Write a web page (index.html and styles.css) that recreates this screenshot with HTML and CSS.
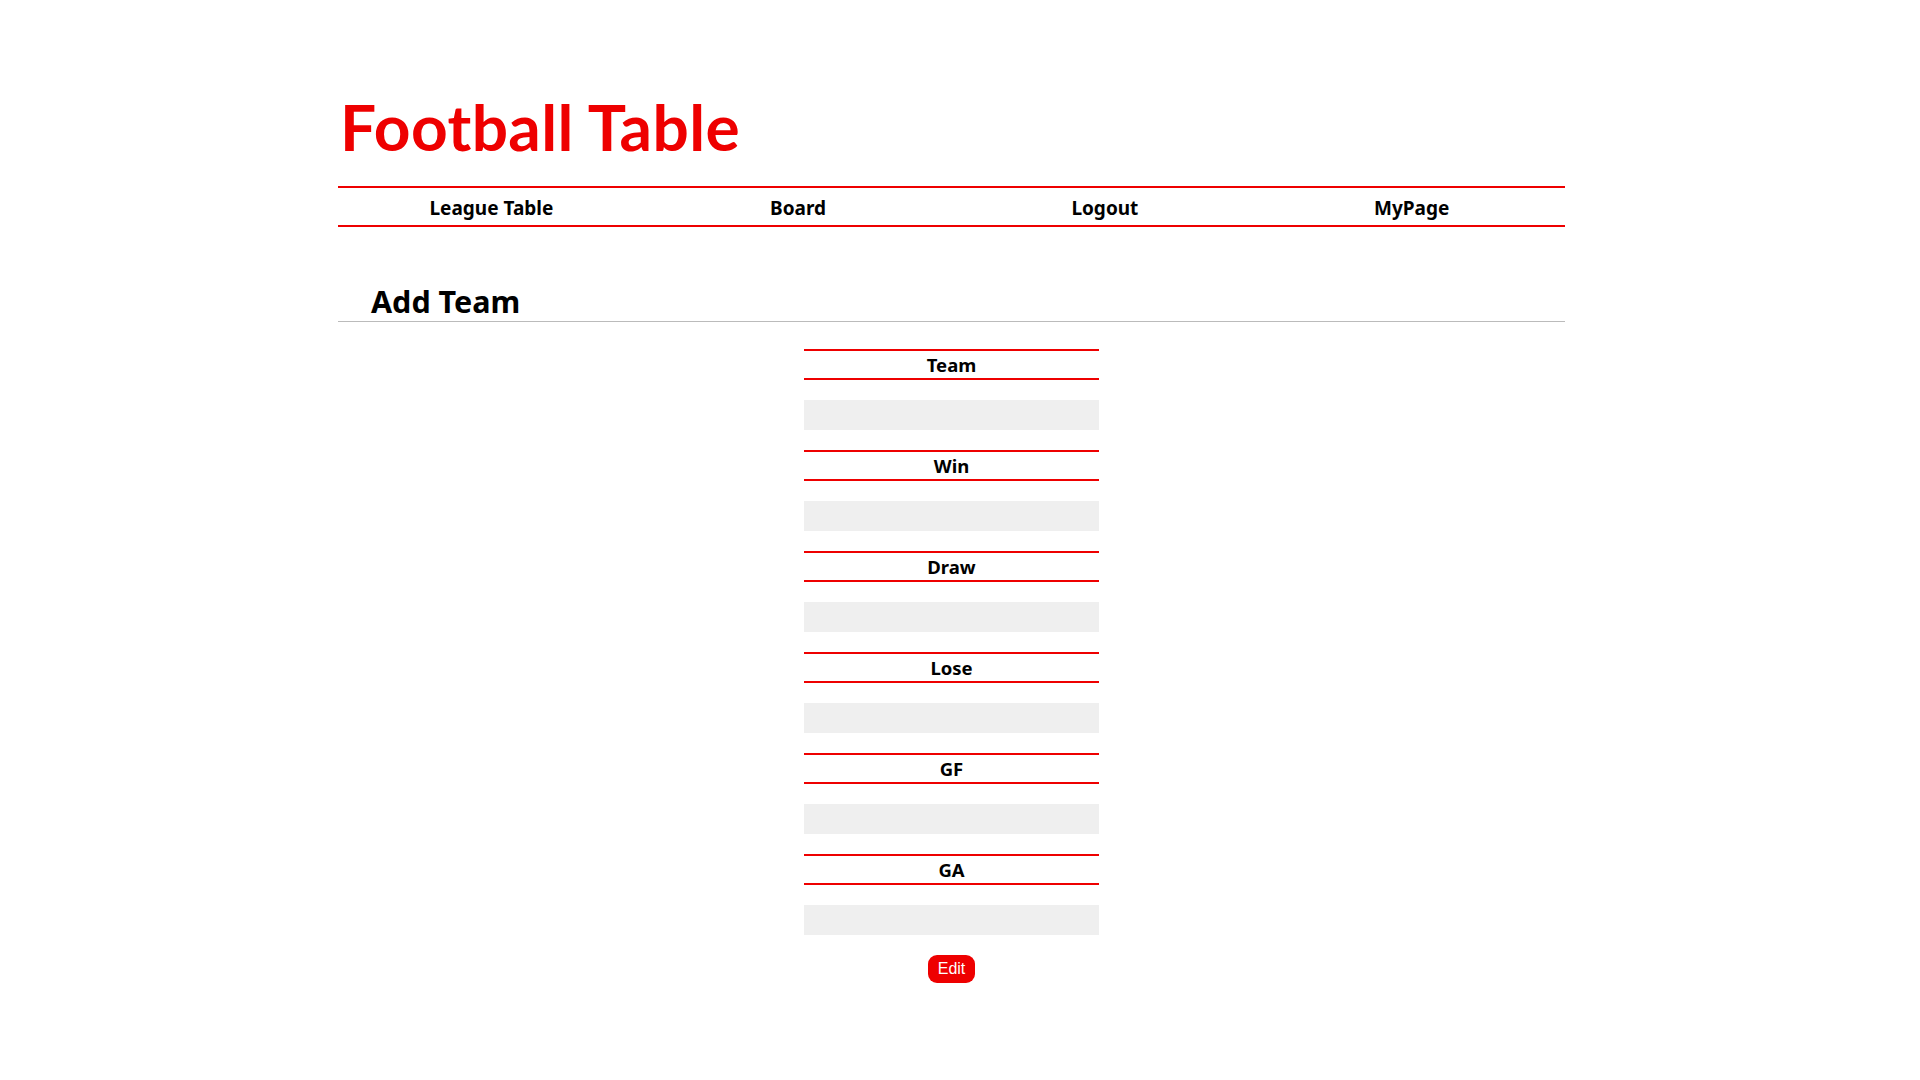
FILE: index.html
```html
<!DOCTYPE html>
<html lang="en">
<head>
<meta charset="utf-8">
<title>Football Table - Add Team</title>
<link rel="stylesheet" href="styles.css">
</head>
<body>
<div class="wrap">
  <header class="header">
    <h1 class="title">Football Table</h1>
    <nav class="nav">
      <a class="nav-item" href="#">League Table</a>
      <a class="nav-item" href="#">Board</a>
      <a class="nav-item" href="#">Logout</a>
      <a class="nav-item" href="#">MyPage</a>
    </nav>
  </header>
  <main class="main">
    <h2 class="section-title">Add Team</h2>
    <form class="form">
      <div class="field"><label class="field-label">Team</label><input class="field-input" type="text"></div>
      <div class="field"><label class="field-label">Win</label><input class="field-input" type="text"></div>
      <div class="field"><label class="field-label">Draw</label><input class="field-input" type="text"></div>
      <div class="field"><label class="field-label">Lose</label><input class="field-input" type="text"></div>
      <div class="field"><label class="field-label">GF</label><input class="field-input" type="text"></div>
      <div class="field"><label class="field-label">GA</label><input class="field-input" type="text"></div>
      <div class="actions"><button class="btn" type="button">Edit</button></div>
    </form>
  </main>
</div>
</body>
</html>
```
FILE: styles.css
```css
html, body {
  margin: 0;
  padding: 0;
  background: #fff;
}
body {
  padding-right: 17px;
  font-family: "Noto Sans", "Noto Sans CJK KR", sans-serif;
  color: #000;
}
.wrap {
  width: 1227px;
  margin: 0 auto;
  padding-bottom: 257px;
}
.title {
  margin: 89px 0 0 2px;
  font-family: Lato, "Noto Sans", sans-serif;
  font-size: 64px;
  letter-spacing: 0.4px;
  line-height: 76px;
  font-weight: 700;
  color: #ee0000;
}
.nav {
  margin-top: 21px;
  display: grid;
  grid-template-columns: repeat(4, 1fr);
  border-top: 2px solid #ee0000;
  border-bottom: 2px solid #ee0000;
  height: 37px;
}
.nav-item {
  padding-top: 3px;
  text-align: center;
  line-height: 34px;
  font-size: 19px;
  font-weight: 700;
  color: #000;
  text-decoration: none;
}
.section-title {
  margin: 54px 0 0;
  padding-left: 33px;
  font-size: 30.5px;
  line-height: 40px;
  font-weight: 700;
  border-bottom: 1px solid #bbbbbb;
}
.form {
  width: 295px;
  margin: 27px auto 0;
  display: flex;
  flex-direction: column;
}
.field {
  display: flex;
  flex-direction: column;
  gap: 20px;
  margin-bottom: 20px;
}
.field-label {
  display: block;
  border-top: 2px solid #ee0000;
  border-bottom: 2px solid #ee0000;
  padding-top: 1px;
  height: 26px;
  line-height: 26px;
  text-align: center;
  font-size: 18.5px;
  font-weight: 700;
}
.field-input {
  display: block;
  box-sizing: border-box;
  width: 100%;
  height: 30px;
  margin: 0;
  padding: 0 6px;
  border: none;
  background: #efefef;
  outline: none;
}
.actions {
  display: flex;
  justify-content: center;
}
.btn {
  background: #ee0000;
  color: #fff;
  border: none;
  border-radius: 9px;
  width: 47px;
  height: 28px;
  padding: 0;
  font-family: "Liberation Sans", Arial, sans-serif;
  font-size: 16px;
  cursor: pointer;
}
```
